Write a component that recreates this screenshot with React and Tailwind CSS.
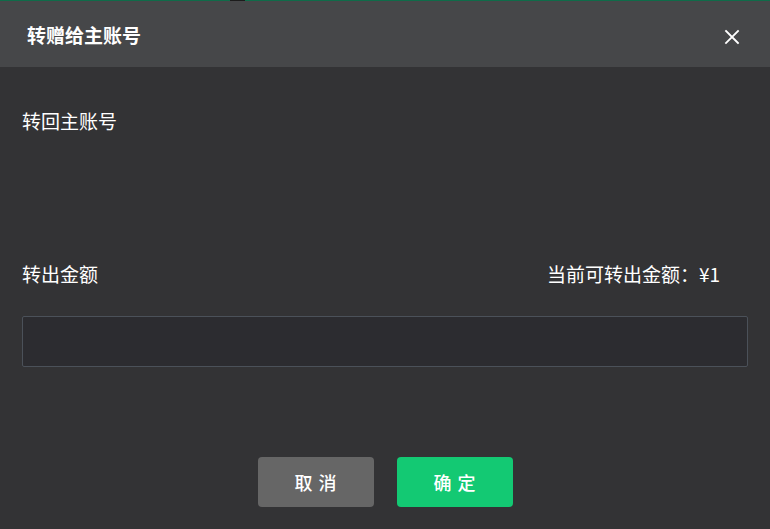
import React from 'react';

const App = () => {
  return (
    <div
      className="w-[770px] h-[529px] bg-[#333335] flex flex-col overflow-hidden"
      style={{ fontFamily: '"Noto Sans CJK SC", "Noto Sans", sans-serif' }}
    >
      {/* top edge */}
      <div className="h-px bg-[#0f6b49] flex shrink-0">
        <div className="w-[230px]" />
        <div className="w-[15px] bg-[#1c1c1c]" />
      </div>

      {/* Header */}
      <div className="h-[66px] bg-[#464749] flex items-center justify-between pl-[27px] pr-[30px] shrink-0">
        <h2 className="text-[19px] font-bold text-white leading-none">转赠给主账号</h2>
        <button className="text-white mt-[5px]">
          <svg width="16" height="16" viewBox="0 0 16 16" fill="none" stroke="currentColor" strokeWidth="1.8" strokeLinecap="square">
            <path d="M2 2L14 14M14 2L2 14" />
          </svg>
        </button>
      </div>

      {/* Body */}
      <div className="flex-1 flex flex-col px-[22px]">
        <p className="text-[19px] text-white leading-none mt-[44px]">转回主账号</p>

        <div className="flex items-center justify-between mt-[134px] pr-[28px]">
          <span className="text-[19px] text-white leading-none">转出金额</span>
          <span className="text-[19px] text-white leading-none">当前可转出金额：¥1</span>
        </div>

        <input
          className="mt-[33px] h-[51px] w-full bg-[#2c2c30] border border-[#4b5159] rounded-[2px] outline-none text-white px-3"
          type="text"
        />

        <div className="flex justify-center gap-[23px] mt-[90px]">
          <button className="w-[116px] h-[50px] rounded-[4px] bg-[#666666] text-white text-[18px] font-medium tracking-[6px] pl-[6px]">
            取消
          </button>
          <button className="w-[116px] h-[50px] rounded-[4px] bg-[#13c973] text-white text-[18px] font-medium tracking-[6px] pl-[6px]">
            确定
          </button>
        </div>
      </div>
    </div>
  );
};

export default App;
